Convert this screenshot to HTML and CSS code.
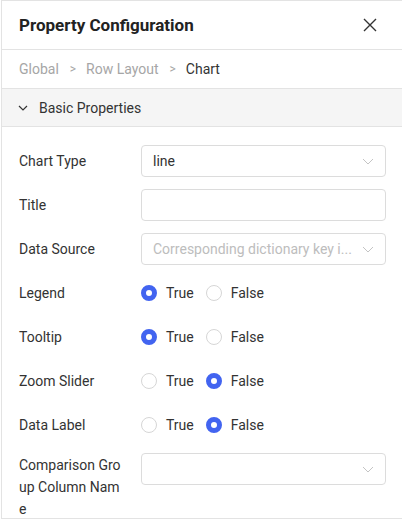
FILE: index.html
```html
<!DOCTYPE html>
<html lang="en">
<head>
<meta charset="utf-8">
<title>Property Configuration</title>
<link rel="stylesheet" href="styles.css">
</head>
<body>
<aside class="panel">
  <header class="panel-header">
    <h2 class="panel-title">Property Configuration</h2>
    <button class="close-btn" aria-label="Close">
      <svg width="14" height="14" viewBox="0 0 14 14"><path d="M1 1L13 13M13 1L1 13" stroke="#333" stroke-width="1.4" fill="none"/></svg>
    </button>
  </header>
  <nav class="crumbs">
    <span class="crumb">Global</span><span class="sep">&gt;</span>
    <span class="crumb">Row Layout</span><span class="sep">&gt;</span>
    <span class="crumb current">Chart</span>
  </nav>
  <div class="section-head">
    <svg class="chev" width="10" height="6" viewBox="0 0 10 6"><path d="M1 1L5 5L9 1" stroke="#333" stroke-width="1.2" fill="none"/></svg>
    <span>Basic Properties</span>
  </div>
  <form class="form">
    <div class="row">
      <label class="label">Chart Type</label>
      <div class="select"><span class="value">line</span><svg class="arrow" width="12" height="7" viewBox="0 0 12 7"><path d="M1 1L6 6L11 1" stroke="#c4c4c4" stroke-width="1" fill="none"/></svg></div>
    </div>
    <div class="row">
      <label class="label">Title</label>
      <div class="input"></div>
    </div>
    <div class="row">
      <label class="label">Data Source</label>
      <div class="select"><span class="value placeholder">Corresponding dictionary key i...</span><svg class="arrow" width="12" height="7" viewBox="0 0 12 7"><path d="M1 1L6 6L11 1" stroke="#c4c4c4" stroke-width="1" fill="none"/></svg></div>
    </div>
    <div class="row">
      <label class="label">Legend</label>
      <div class="radios">
        <span class="radio"><i class="dot on"></i>True</span>
        <span class="radio"><i class="dot"></i>False</span>
      </div>
    </div>
    <div class="row">
      <label class="label">Tooltip</label>
      <div class="radios">
        <span class="radio"><i class="dot on"></i>True</span>
        <span class="radio"><i class="dot"></i>False</span>
      </div>
    </div>
    <div class="row">
      <label class="label">Zoom Slider</label>
      <div class="radios">
        <span class="radio"><i class="dot"></i>True</span>
        <span class="radio"><i class="dot on"></i>False</span>
      </div>
    </div>
    <div class="row">
      <label class="label">Data Label</label>
      <div class="radios">
        <span class="radio"><i class="dot"></i>True</span>
        <span class="radio"><i class="dot on"></i>False</span>
      </div>
    </div>
    <div class="row top">
      <label class="label wrap">Comparison Group Column Name</label>
      <div class="select"><span class="value"></span><svg class="arrow" width="12" height="7" viewBox="0 0 12 7"><path d="M1 1L6 6L11 1" stroke="#c4c4c4" stroke-width="1" fill="none"/></svg></div>
    </div>
  </form>
</aside>
</body>
</html>
```

FILE: styles.css
```css
* { box-sizing: border-box; }

html, body {
  margin: 0;
  padding: 0;
  background: #fff;
}

body {
  font-family: Roboto, "Noto Sans", sans-serif;
  font-size: 14px;
  color: #333;
}

.panel {
  margin-left: 1px;
  width: 401px;
  height: 519px;
  border: 1px solid #e3e3e3;
  border-right: none;
  overflow: hidden;
}

.panel-header {
  height: 49px;
  display: flex;
  align-items: center;
  justify-content: space-between;
  padding: 0 17px 0 17px;
  border-bottom: 1px solid #e3e3e3;
}

.panel-title {
  margin: 0;
  font-size: 17px;
  font-weight: 700;
  color: #222;
}

.close-btn {
  border: none;
  background: none;
  padding: 0;
  width: 14px;
  height: 14px;
  display: flex;
  margin-right: 8px;
}

.crumbs {
  height: 39px;
  display: flex;
  align-items: center;
  padding: 0 17px;
  border-bottom: 1px solid #e3e3e3;
  color: #a6a6a6;
}

.crumb.current { color: #333; }

.sep {
  font-size: 12px;
  margin: 0 10px 0 11px;
}

.section-head {
  height: 38px;
  display: flex;
  align-items: center;
  background: #f5f5f5;
  border-bottom: 1px solid #e3e3e3;
  padding-left: 16px;
  gap: 11px;
  color: #333;
}

.form {
  padding: 18px 16px 0 17px;
  display: flex;
  flex-direction: column;
  gap: 12px;
}

.row {
  display: flex;
  align-items: center;
  min-height: 32px;
}

.row.top { align-items: flex-start; }

.label {
  width: 122px;
  flex: none;
  color: #333;
  padding-right: 16px;
}

.label.wrap {
  word-break: break-all;
  line-height: 22px;
  padding-top: 1px;
  padding-right: 18px;
}

.select, .input {
  flex: 1;
  min-width: 0;
  height: 32px;
  border: 1px solid #dcdcdc;
  border-radius: 4px;
  display: flex;
  align-items: center;
  justify-content: space-between;
  gap: 8px;
  padding: 0 11px 0 11px;
}

.value {
  color: #333;
  white-space: nowrap;
  overflow: hidden;
  text-overflow: ellipsis;
}

.value.placeholder { color: #bdbdbd; }

.arrow { flex: none; }

.radios {
  display: flex;
  align-items: center;
  gap: 12px;
}

.radio {
  display: flex;
  align-items: center;
  gap: 9px;
  color: #333;
}

.dot {
  width: 16px;
  height: 16px;
  border-radius: 50%;
  border: 1px solid #d6d6d6;
  background: #fff;
  display: block;
}

.dot.on {
  border: 5px solid #4264f0;
}
```
